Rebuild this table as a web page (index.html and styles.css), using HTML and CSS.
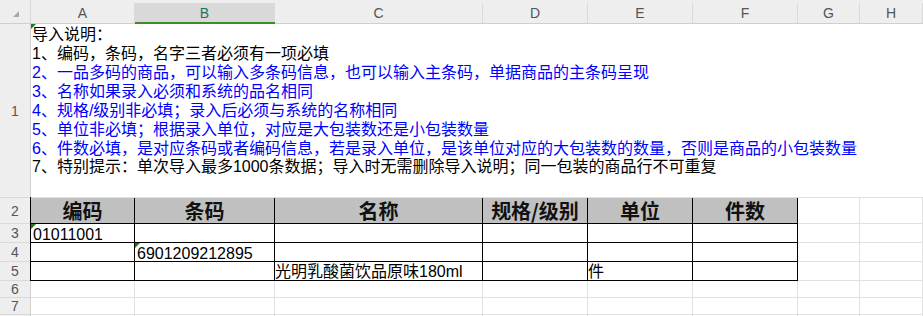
FILE: index.html
```html
<!DOCTYPE html>
<html lang="zh-CN">
<head>
<meta charset="utf-8">
<title>导入模板</title>
<link rel="stylesheet" href="styles.css">
</head>
<body>
<div class="sheet">
  <div class="corner"><span class="tri"></span></div>
  <div class="colh"><span class="colh-in">A</span></div>
  <div class="colh sel"><span class="colh-in">B</span></div>
  <div class="colh"><span class="colh-in">C</span></div>
  <div class="colh"><span class="colh-in">D</span></div>
  <div class="colh"><span class="colh-in">E</span></div>
  <div class="colh"><span class="colh-in">F</span></div>
  <div class="colh"><span class="colh-in">G</span></div>
  <div class="colh"><span class="colh-in">H</span></div>

  <div class="rowh">1</div>
  <div class="c note">
    <span class="flag"></span>
    <div class="ln">导入说明：</div>
    <div class="ln">1、编码，条码，名字三者必须有一项必填</div>
    <div class="ln blue">2、一品多码的商品，可以输入多条码信息，也可以输入主条码，单据商品的主条码呈现</div>
    <div class="ln blue">3、名称如果录入必须和系统的品名相同</div>
    <div class="ln blue">4、规格/级别非必填；录入后必须与系统的名称相同</div>
    <div class="ln blue">5、单位非必填；根据录入单位，对应是大包装数还是小包装数量</div>
    <div class="ln blue">6、件数必填，是对应条码或者编码信息，若是录入单位，是该单位对应的大包装数的数量，否则是商品的小包装数量</div>
    <div class="ln">7、特别提示：单次导入最多1000条数据；导入时无需删除导入说明；同一包装的商品行不可重复</div>
  </div>

  <div class="rowh">2</div><div class="c"></div><div class="c"></div>
  <div class="rowh">3</div><div class="c"></div><div class="c"></div>
  <div class="rowh">4</div><div class="c"></div><div class="c"></div>
  <div class="rowh">5</div><div class="c"></div><div class="c"></div>

  <div class="rowh">6</div>
  <div class="c"></div><div class="c"></div><div class="c"></div><div class="c"></div>
  <div class="c"></div><div class="c"></div><div class="c"></div><div class="c"></div>
  <div class="rowh">7</div>
  <div class="c"></div><div class="c"></div><div class="c"></div><div class="c"></div>
  <div class="c"></div><div class="c"></div><div class="c"></div><div class="c"></div>
  <div class="rowh"></div>
  <div class="c"></div><div class="c"></div><div class="c"></div><div class="c"></div>
  <div class="c"></div><div class="c"></div><div class="c"></div><div class="c"></div>

  <div class="tbl">
    <div class="th">编码</div>
    <div class="th">条码</div>
    <div class="th">名称</div>
    <div class="th">规格/级别</div>
    <div class="th">单位</div>
    <div class="th">件数</div>

    <div class="td"><span class="flag"></span>01011001</div>
    <div class="td"></div><div class="td"></div><div class="td"></div><div class="td"></div><div class="td"></div>

    <div class="td"></div>
    <div class="td"><span class="flag"></span>6901209212895</div>
    <div class="td"></div><div class="td"></div><div class="td"></div><div class="td"></div>

    <div class="td"></div><div class="td"></div>
    <div class="td cjk">光明乳酸菌饮品原味180ml</div>
    <div class="td"></div>
    <div class="td cjk">件</div>
    <div class="td"></div>
  </div>
</div>
</body>
</html>
```

FILE: styles.css
```css
html, body {
  margin: 0;
  padding: 0;
  background: #ffffff;
}

body {
  font-family: "Liberation Sans", "Noto Sans CJK SC", sans-serif;
  color: #000;
  overflow: hidden;
}

.sheet {
  display: grid;
  grid-template-columns: 31px 104px 140px 208px 105px 105px 105px 62px 63px;
  grid-template-rows: 24px 174px 26px 19px 19px 19px 17px 17px 2px;
  width: 923px;
  height: 316px;
}

/* headers */
.corner {
  background: #eeeeee;
  border-right: 1px solid #d8d8d8;
  border-bottom: 1px solid #cfcfcf;
  box-sizing: border-box;
  position: relative;
}

.tri {
  position: absolute;
  left: 13px;
  top: 11px;
  width: 0;
  height: 0;
  border-style: solid;
  border-width: 0 0 6px 6px;
  border-color: transparent transparent #a9a9a9 transparent;
}

.colh {
  display: flex;
  padding-top: 3px;
  background: #eeeeee;
  border-bottom: 1px solid #cfcfcf;
  box-sizing: border-box;
}

.colh-in {
  flex: 1;
  display: flex;
  align-items: center;
  justify-content: center;
  border-right: 1px solid #dadada;
  font-family: "Liberation Sans", Arial, sans-serif;
  font-size: 14px;
  color: #555555;
}

.colh.sel {
  border-bottom: 2px solid #3c8c2a;
}

.colh.sel .colh-in {
  background: #d9d9d9;
  color: #1e7360;
}

.rowh {
  display: flex;
  align-items: center;
  justify-content: center;
  background: #eeeeee;
  border-right: 1px solid #d0d0d0;
  border-bottom: 1px solid #dadada;
  box-sizing: border-box;
  font-family: "Liberation Sans", Arial, sans-serif;
  font-size: 14px;
  color: #555555;
}

/* plain cells */
.c {
  border-right: 1px solid #e1e1e1;
  border-bottom: 1px solid #e1e1e1;
  box-sizing: border-box;
}

.note {
  grid-column: 2 / -1;
  position: relative;
  border-right: none;
  padding: 2.1px 0 0 1px;
  font-family: "Liberation Sans", "Noto Sans CJK SC", sans-serif;
  font-size: 16px;
  line-height: 18.9px;
  white-space: nowrap;
  color: #000;
}

.ln.blue {
  color: #0000ff;
}

.flag {
  position: absolute;
  left: 0;
  top: 0;
  width: 0;
  height: 0;
  border-style: solid;
  border-width: 5px 5px 0 0;
  border-color: #1f7a1f transparent transparent transparent;
}

/* bordered table */
.tbl {
  grid-column: 2 / 8;
  grid-row: 3 / 7;
  margin: -1px 0 0 -1px;
  display: grid;
  grid-template-columns: 104px 140px 208px 105px 105px 105px;
  grid-template-rows: 26px 19px 19px 19px;
  border-top: 1px solid #000;
  border-left: 1px solid #000;
}

.th {
  display: flex;
  align-items: center;
  justify-content: center;
  background: #c0c0c0;
  border-right: 1px solid #000;
  border-bottom: 1px solid #000;
  box-sizing: border-box;
  font-family: "Noto Sans CJK SC", sans-serif;
  font-size: 20px;
  line-height: 22px;
  font-weight: 700;
  color: #111;
}

.td {
  position: relative;
  display: flex;
  align-items: flex-end;
  border-right: 1px solid #000;
  border-bottom: 1px solid #000;
  box-sizing: border-box;
  padding: 0 0 0 2px;
  font-family: "Liberation Sans", "Noto Sans CJK SC", sans-serif;
  font-size: 16px;
  line-height: 15px;
  white-space: nowrap;
}

.td.cjk {
  padding-left: 0;
  padding-bottom: 1px;
}
```
